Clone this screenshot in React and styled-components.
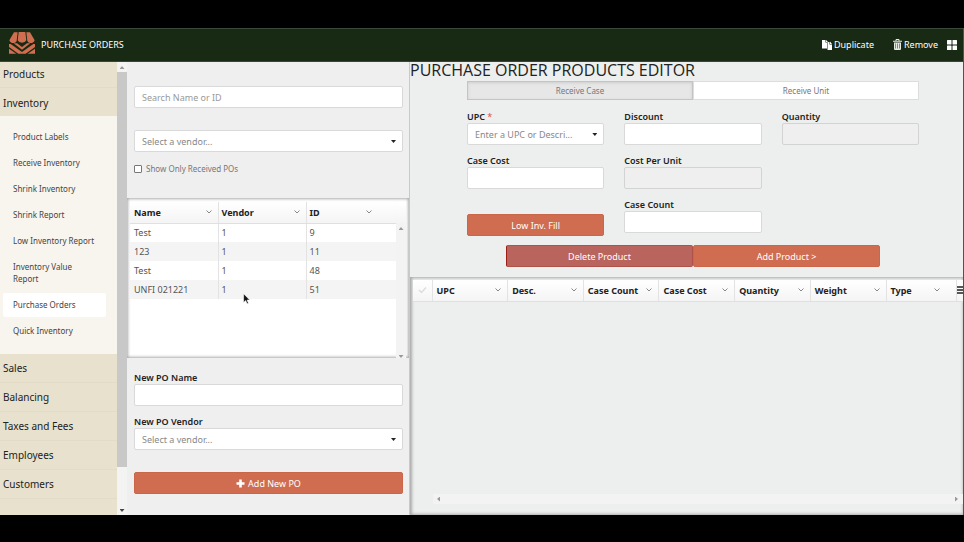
import React from "react";
import styled, { createGlobalStyle } from "styled-components";

const navTop = [{ name: "Products" }, { name: "Inventory", open: true }];

const inventoryLinks = [
  "Product Labels",
  "Receive Inventory",
  "Shrink Inventory",
  "Shrink Report",
  "Low Inventory Report",
  "Inventory Value Report",
  "Purchase Orders",
  "Quick Inventory",
];

const navBottom = [
  "Sales",
  "Balancing",
  "Taxes and Fees",
  "Employees",
  "Customers",
];

const orders = [
  { name: "Test", vendor: 1, id: 9 },
  { name: "123", vendor: 1, id: 11 },
  { name: "Test", vendor: 1, id: 48 },
  { name: "UNFI 021221", vendor: 1, id: 51 },
];

const productColumns = [
  "UPC",
  "Desc.",
  "Case Count",
  "Case Cost",
  "Quantity",
  "Weight",
  "Type",
];

export default function App() {
  return (
    <Page>
      <GlobalStyle />
      <Header>
        <Logo />
        <h1>PURCHASE ORDERS</h1>
        <Actions>
          <HeaderButton type="button">
            <DuplicateIcon />
            Duplicate
          </HeaderButton>
          <HeaderButton type="button">
            <TrashIcon />
            Remove
          </HeaderButton>
          <HeaderButton type="button" aria-label="Apps">
            <AppsIcon />
          </HeaderButton>
        </Actions>
      </Header>
      <Body>
        <Sidebar />
        <OrdersPanel />
        <ProductsPanel />
      </Body>
      <Cursor viewBox="0 0 12 20" aria-hidden="true">
        <path
          d="M1 1v15l3.6-3.4 2.3 5.6 2.4-1-2.3-5.4h4.6z"
          fill="#111"
          stroke="#fff"
          strokeWidth="1"
        />
      </Cursor>
    </Page>
  );
}

function Sidebar() {
  return (
    <SideWrapper>
      <Nav>
        {navTop.map((g) => (
          <NavGroup key={g.name} type="button" $open={g.open}>
            {g.name}
          </NavGroup>
        ))}
        <SubNav>
          {inventoryLinks.map((name) => (
            <SubLink key={name} href="#" $active={name === "Purchase Orders"}>
              {name}
            </SubLink>
          ))}
        </SubNav>
        {navBottom.map((name) => (
          <NavGroup key={name} type="button">
            {name}
          </NavGroup>
        ))}
      </Nav>
      <Track>
        <Arrow $dir="up" $color="#999" />
        <Thumb />
        <Arrow $dir="down" $color="#444" />
      </Track>
    </SideWrapper>
  );
}

function VendorSelect({ id, text, label }) {
  return (
    <SelectBox>
      <select id={id} aria-label={label} defaultValue="">
        <option value="">{text}</option>
      </select>
      <Arrow $dir="down" $color="#222" />
    </SelectBox>
  );
}

function OrdersPanel() {
  return (
    <Left>
      <Filters>
        <TextInput placeholder="Search Name or ID" aria-label="Search" />
        <VendorSelect text="Select a vendor..." label="Vendor" />
        <CheckLabel>
          <input type="checkbox" />
          Show Only Received POs
        </CheckLabel>
      </Filters>
      <OrdersGrid>
        <OrdersTable>
          <thead>
            <tr>
              {["Name", "Vendor", "ID"].map((c) => (
                <th key={c}>
                  <HeadCell>
                    {c}
                    <Chevron />
                  </HeadCell>
                </th>
              ))}
              <th aria-label="Scroll" />
            </tr>
          </thead>
          <tbody>
            {orders.map((o) => (
              <tr key={o.id}>
                <td>{o.name}</td>
                <td>{o.vendor}</td>
                <td>{o.id}</td>
              </tr>
            ))}
          </tbody>
        </OrdersTable>
        <GridTrack>
          <Arrow $dir="up" $color="#999" />
          <Arrow $dir="down" $color="#999" />
        </GridTrack>
      </OrdersGrid>
      <NewOrder>
        <Field>
          <label htmlFor="po-name">New PO Name</label>
          <TextInput id="po-name" />
        </Field>
        <Field>
          <label htmlFor="po-vendor">New PO Vendor</label>
          <VendorSelect id="po-vendor" text="Select a vendor..." />
        </Field>
        <Button type="button">
          <PlusIcon />
          Add New PO
        </Button>
      </NewOrder>
    </Left>
  );
}

function ProductsPanel() {
  return (
    <Right>
      <Editor>
        <h2>PURCHASE ORDER PRODUCTS EDITOR</h2>
        <Tabs>
          <Tab type="button" $active>
            Receive Case
          </Tab>
          <Tab type="button">Receive Unit</Tab>
        </Tabs>
        <Fields>
          <Column>
            <Field>
              <label htmlFor="upc">
                UPC <i>*</i>
              </label>
              <VendorSelect id="upc" text="Enter a UPC or Descri..." />
            </Field>
            <Field>
              <label htmlFor="case-cost">Case Cost</label>
              <TextInput id="case-cost" />
            </Field>
            <FillButton type="button">Low Inv. Fill</FillButton>
          </Column>
          <Column>
            <Field>
              <label htmlFor="discount">Discount</label>
              <TextInput id="discount" />
            </Field>
            <Field>
              <label htmlFor="unit-cost">Cost Per Unit</label>
              <TextInput id="unit-cost" disabled />
            </Field>
            <Field>
              <label htmlFor="case-count">Case Count</label>
              <TextInput id="case-count" />
            </Field>
          </Column>
          <Column>
            <Field>
              <label htmlFor="quantity">Quantity</label>
              <TextInput id="quantity" disabled />
            </Field>
          </Column>
        </Fields>
        <ButtonPair>
          <Button type="button" $danger>
            Delete Product
          </Button>
          <Button type="button">Add Product &gt;</Button>
        </ButtonPair>
      </Editor>
      <ProductsGrid>
        <ProductsTable>
          <thead>
            <tr>
              <th aria-label="Select all">
                <svg width="9" height="8" viewBox="0 0 9 8" fill="none">
                  <path d="M1 4l2.5 2.5L8 1.5" stroke="#ddd" strokeWidth="1.5" />
                </svg>
              </th>
              {productColumns.map((c) => (
                <th key={c}>
                  <HeadCell>
                    {c}
                    <Chevron />
                  </HeadCell>
                </th>
              ))}
              <th aria-label="Menu">
                <svg width="6" height="8" viewBox="0 0 6 8">
                  <path d="M0 1h6M0 4h6M0 7h6" stroke="#222" strokeWidth="1.4" />
                </svg>
              </th>
            </tr>
          </thead>
        </ProductsTable>
        <BottomTrack>
          <Arrow $dir="left" $color="#999" />
          <Arrow $dir="right" $color="#999" />
        </BottomTrack>
      </ProductsGrid>
    </Right>
  );
}

function Logo() {
  return (
    <svg width="26" height="22" viewBox="0 0 78 66" fill="#cf6e50">
      <path d="M15 1h11l-3 26q-3 6-8 6h-6q-6-1-8-8z" />
      <path d="M29 0h20l3 25q-3 7-13 7t-13-7z" />
      <path d="M63 1H52l3 26q3 6 8 6h6q6-1 8-8z" />
      <path d="M0 36h5l34 24 34-24h5v9L50 65H28L0 45z" />
      <path d="M14 34h10l15 11 15-11h10L39 53z" />
      <path d="M0 50l22 15H0zM78 50L56 65h22z" />
    </svg>
  );
}

function DuplicateIcon() {
  return (
    <svg width="10" height="10" viewBox="0 0 20 20" fill="#fff">
      <path d="M0 0h7v5h3v12H0zM8 0l4 4H8z" />
      <path d="M11 4h4v5h5v11h-9zM16 3l4 5h-4z" />
    </svg>
  );
}

function TrashIcon() {
  return (
    <svg width="9" height="11" viewBox="0 0 18 22">
      <path
        d="M6 4V1h6v3M0 4.5h18"
        fill="none"
        stroke="#e6e8e3"
        strokeWidth="2"
      />
      <path
        fillRule="evenodd"
        d="M2 7h14v13q0 2-2 2H4q-2 0-2-2zM5 9v10h1V9zM8.5 9v10h1V9zM12 9v10h1V9z"
        fill="#e6e8e3"
      />
    </svg>
  );
}

function AppsIcon() {
  return (
    <svg width="10" height="10" viewBox="0 0 20 20" fill="#fff">
      <rect width="9" height="9" rx="1" />
      <rect x="11" width="9" height="9" rx="1" />
      <rect y="11" width="9" height="9" rx="1" />
      <rect x="11" y="11" width="9" height="9" rx="1" />
    </svg>
  );
}

function PlusIcon() {
  return (
    <svg width="9" height="9" viewBox="0 0 9 9">
      <path d="M4.5 0.5v8M0.5 4.5h8" stroke="#fff" strokeWidth="2.6" />
    </svg>
  );
}

function Chevron() {
  return (
    <svg width="6" height="4" viewBox="0 0 6 4" fill="none">
      <path d="M0.5 0.5L3 3l2.5-2.5" stroke="#888" />
    </svg>
  );
}

const GlobalStyle = createGlobalStyle`
  * {
    box-sizing: border-box;
  }
  body {
    margin: 0;
    background: #000;
    font-family: "Noto Sans", "Open Sans", sans-serif;
    font-size: 9px;
    color: #222;
  }
  button, input, select {
    font-family: inherit;
    font-size: inherit;
  }
  h1, h2 {
    margin: 0;
    font-weight: 400;
  }
`;

const Page = styled.div`
  display: flex;
  flex-direction: column;
  height: 100vh;
  min-height: 542px;
  padding: 28px 0 27px;
  background: #000;
  position: relative;
`;

const Header = styled.header`
  display: flex;
  align-items: center;
  gap: 6px;
  height: 34px;
  flex: none;
  padding: 0 6px 4px 9px;
  background: #182a14;
  border-top: 1px solid #3c4a3a;
  border-right: 1px solid #2458b8;
  border-bottom: 1px solid #3a4437;
  color: #fff;
  h1 {
    font-size: 9px;
    padding-top: 3px;
  }
`;

const Actions = styled.div`
  display: flex;
  align-items: center;
  gap: 9px;
  margin-left: auto;
  padding-top: 3px;
  button:first-child {
    margin-right: 10px;
  }
`;

const HeaderButton = styled.button`
  display: flex;
  align-items: center;
  gap: 2px;
  padding: 0;
  border: 0;
  background: none;
  color: #fff;
`;

const Body = styled.div`
  display: grid;
  grid-template-columns: 127px 283px 1fr;
  flex: 1;
  min-height: 0;
  border-right: 1px solid #2458b8;
`;

const SideWrapper = styled.aside`
  display: flex;
  min-height: 0;
`;

const Nav = styled.nav`
  flex: 1;
  background: #e7e1cd;
  overflow: hidden;
`;

const NavGroup = styled.button`
  display: block;
  width: 100%;
  height: ${(p) => (p.$open ? 28 : 29)}px;
  padding: ${(p) => (p.$open ? 2 : 0)}px 3px 0;
  border: 0;
  border-bottom: 1px solid ${(p) => (p.$open ? "#e7e1cd" : "#e3dbc5")};
  background: none;
  color: #222;
  font-size: 10px;
  text-align: left;
  &:first-child {
    height: 26px;
    padding-bottom: 2px;
  }
`;

const SubNav = styled.div`
  display: flex;
  flex-direction: column;
  gap: 2px;
  padding: 9px 11px 11px 3px;
  background: #f8f5ee;
`;

const SubLink = styled.a`
  padding: 6px 10px;
  border-radius: 2px;
  background: ${(p) => (p.$active ? "#fff" : "none")};
  color: #444;
  font-size: 8px;
  line-height: 12px;
  text-decoration: none;
`;

const Track = styled.div`
  display: flex;
  flex-direction: column;
  align-items: center;
  justify-content: space-between;
  width: 10px;
  padding: 4px 0 3px;
  background: #f3f3f3;
`;

const Thumb = styled.div`
  width: 10px;
  height: 395px;
  margin: 3px 0 auto;
  background: #c8c8c8;
`;

const arrows = {
  up: "polygon(50% 0, 100% 100%, 0 100%)",
  down: "polygon(0 0, 100% 0, 50% 100%)",
  left: "polygon(0 50%, 100% 0, 100% 100%)",
  right: "polygon(0 0, 100% 50%, 0 100%)",
};

const Arrow = styled.span`
  flex: none;
  width: ${(p) => (p.$dir === "up" || p.$dir === "down" ? 5 : 3)}px;
  height: ${(p) => (p.$dir === "up" || p.$dir === "down" ? 3 : 5)}px;
  background: ${(p) => p.$color};
  clip-path: ${(p) => arrows[p.$dir]};
`;

const Left = styled.section`
  display: flex;
  flex-direction: column;
  min-height: 0;
  background: #efefef;
  border-right: 1px solid #c9c9c9;
`;

const Filters = styled.div`
  display: flex;
  flex-direction: column;
  gap: 22px;
  height: 136px;
  flex: none;
  padding: 24px 6px 0 7px;
`;

const TextInput = styled.input`
  display: block;
  width: 100%;
  height: 22px;
  padding: 0 7px;
  border: 1px solid #d9d9d9;
  border-radius: 2px;
  background: #fff;
  &:disabled {
    background: #efefef;
    border-color: #d3d3d3;
  }
  &::placeholder {
    color: #999;
  }
`;

const SelectBox = styled.div`
  position: relative;
  select {
    display: block;
    width: 100%;
    height: 22px;
    padding: 0 7px;
    border: 1px solid #d9d9d9;
    border-radius: 2px;
    background: #fff;
    color: #888;
    appearance: none;
  }
  ${Arrow} {
    position: absolute;
    top: 10px;
    right: 7px;
    pointer-events: none;
  }
`;

const CheckLabel = styled.label`
  display: flex;
  align-items: center;
  gap: 4px;
  margin-top: -12px;
  color: #777;
  font-size: 8px;
  line-height: 14px;
  input {
    appearance: none;
    width: 8px;
    height: 8px;
    margin: 0;
    border: 1px solid #777;
    border-radius: 1px;
    background: #fff;
  }
`;

const OrdersGrid = styled.div`
  position: relative;
  flex: 1;
  min-height: 0;
  padding: 4px 3px 3px;
  background: #fff;
  box-shadow: inset 0 0 3px 1px #aaa;
  overflow: hidden;
`;

const HeadCell = styled.div`
  display: flex;
  align-items: center;
  justify-content: space-between;
`;

const Grid = styled.table`
  width: 100%;
  border-collapse: collapse;
  table-layout: fixed;
  th {
    height: 21px;
    padding: 0 6px 0 4px;
    border-left: 1px solid #e3e3e3;
    border-bottom: 1px solid #e0e0e0;
    background: linear-gradient(#fff, #f4f4f4);
    font-weight: 700;
    text-align: left;
  }
`;

const OrdersTable = styled(Grid)`
  th,
  td {
    padding-left: 3px;
  }
  th:first-child,
  td:first-child {
    padding-left: 4px;
    border-left: 0;
  }
  th:nth-child(-n + 2) {
    width: 88px;
  }
  th:nth-child(3) {
    padding-right: 24px;
  }
  th:last-child {
    width: 10px;
    padding: 0;
    border-left: 0;
  }
  td {
    height: 19px;
    border-left: 1px solid #e3e3e3;
    color: #555;
  }
  tbody tr:nth-child(even) {
    background: #f4f4f4;
  }
`;

const GridTrack = styled.div`
  position: absolute;
  top: 25px;
  right: 3px;
  bottom: 0;
  display: flex;
  flex-direction: column;
  align-items: center;
  justify-content: space-between;
  width: 10px;
  padding: 4px 0 0;
  background: #f3f3f3;
`;

const NewOrder = styled.div`
  display: flex;
  flex-direction: column;
  gap: 9px;
  flex: none;
  padding: 13px 6px 21px 7px;
  button {
    margin-top: 13px;
  }
`;

const Field = styled.div`
  label {
    display: block;
    font-weight: 600;
    line-height: 13px;
  }
  i {
    color: #d9534f;
    font-style: normal;
    font-weight: 400;
  }
`;

const Button = styled.button`
  display: flex;
  align-items: center;
  justify-content: center;
  gap: 3px;
  width: 100%;
  height: 22px;
  padding: 0;
  border: 1px solid ${(p) => (p.$danger ? "#b0524c" : "#cb6749")};
  border-left-color: ${(p) => (p.$danger ? "#9c1c18" : "#cb6749")};
  border-radius: 2px;
  background: ${(p) => (p.$danger ? "#ba645e" : "#d06d50")};
  color: #fff;
`;

const Right = styled.section`
  display: flex;
  flex-direction: column;
  min-width: 0;
  min-height: 0;
  background: #edefee;
`;

const Editor = styled.div`
  flex: none;
  padding-bottom: 10px;
  h2 {
    font-family: "Open Sans", sans-serif;
    font-size: 16px;
    line-height: 16px;
    margin-bottom: 3px;
  }
`;

const Tabs = styled.div`
  display: flex;
  margin: 0 44px 0 57px;
`;

const Tab = styled.button`
  flex: 1;
  height: 19px;
  padding: 0;
  border: 1px solid ${(p) => (p.$active ? "#c4c4c4" : "#ddd")};
  background: ${(p) => (p.$active ? "#e7e7e7" : "#fff")};
  box-shadow: ${(p) => (p.$active ? "inset 0 1px 3px #ccc" : "none")};
  color: #777;
  font-size: 8px;
`;

const Fields = styled.div`
  display: grid;
  grid-template-columns: repeat(3, 1fr);
  gap: 20px;
  margin: 10px 44px 0 57px;
`;

const Column = styled.div`
  display: flex;
  flex-direction: column;
  gap: 9px;
`;

const FillButton = styled(Button)`
  margin-top: 16px;
`;

const ButtonPair = styled.div`
  display: flex;
  margin: 9px 83px 0 96px;
`;

const ProductsGrid = styled.div`
  display: flex;
  flex-direction: column;
  justify-content: space-between;
  flex: 1;
  min-height: 0;
  padding: 3px 0 11px 3px;
  box-shadow: inset 1px 0 3px 1px #aaa;
  overflow: hidden;
`;

const ProductsTable = styled(Grid)`
  th:first-child {
    width: 19px;
    padding: 0 5px;
    border-left: 0;
  }
  th:nth-child(8) {
    width: 70px;
    padding-right: 16px;
  }
  th:last-child {
    width: 7px;
    padding: 0;
  }
`;

const BottomTrack = styled.div`
  display: flex;
  align-items: center;
  justify-content: space-between;
  height: 10px;
  margin-left: 20px;
  padding: 0 5px 0 4px;
  background: #f3f3f3;
`;

const Cursor = styled.svg`
  position: absolute;
  top: 293px;
  left: 243px;
  width: 7px;
  height: 12px;
`;
